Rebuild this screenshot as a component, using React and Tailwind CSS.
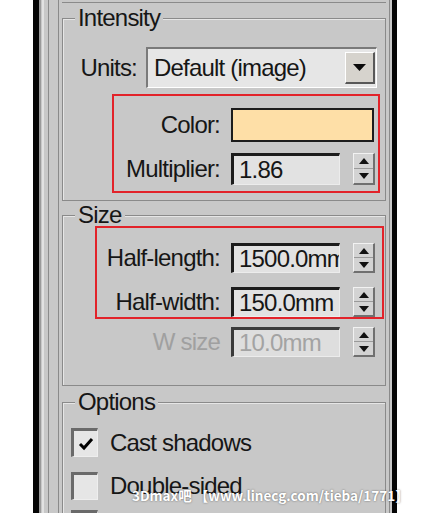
import React from "react";

const LBL = "text-right text-[24px] leading-none tracking-[-0.8px] text-[#161616] whitespace-nowrap";

function UpTri() {
  return (
    <svg width="10" height="6" viewBox="0 0 10 6"><polygon points="5,0 10,6 0,6" fill="#111" /></svg>
  );
}
function DownTri() {
  return (
    <svg width="10" height="6" viewBox="0 0 10 6"><polygon points="0,0 10,0 5,6" fill="#111" /></svg>
  );
}

function Spinner() {
  return (
    <div className="ml-[13px] flex h-full w-[22px] flex-col border-t border-l border-t-[#f2f2f2] border-l-[#f2f2f2] border-r-2 border-b-2 border-r-[#707070] border-b-[#707070] bg-[#d3d3d3]">
      <div className="flex flex-1 items-center justify-center border-b border-[#9a9a9a]">
        <UpTri />
      </div>
      <div className="flex flex-1 items-center justify-center">
        <DownTri />
      </div>
    </div>
  );
}

function NumInput({ value, disabled }) {
  return (
    <div
      className={
        disabled
          ? "flex h-full w-[109px] items-center overflow-hidden whitespace-nowrap border-t-[3px] border-l-[3px] border-t-[#3a3a3a] border-l-[#3a3a3a] border-r border-b border-r-[#ececec] border-b-[#ececec] bg-[#dedede] pl-[5px] text-[24px] leading-none tracking-[-0.8px] text-[#a3a3a3]"
          : "flex h-full w-[109px] items-center overflow-hidden whitespace-nowrap border-t-[3px] border-l-[3px] border-t-[#1c1c1c] border-l-[#1c1c1c] border-r border-b border-r-[#ececec] border-b-[#ececec] bg-[#e2e2e2] pl-[5px] text-[24px] leading-none tracking-[-0.8px] text-[#161616]"
      }
    >
      {value}
    </div>
  );
}

function Checkbox({ checked }) {
  return (
    <div className="flex h-full w-[27px] items-center justify-center border-t-[3px] border-l-[3px] border-t-[#6a6a6a] border-l-[#6a6a6a] border-r border-b border-r-[#eeeeee] border-b-[#eeeeee] bg-[#e6e6e6]">
      {checked && (
        <svg width="16" height="14" viewBox="0 0 16 14">
          <polyline points="2,7 6,11 14,2" fill="none" stroke="#000" strokeWidth="3" />
        </svg>
      )}
    </div>
  );
}

export default function App() {
  return (
    <div className="relative flex h-[513px] w-[443px] overflow-hidden bg-white font-['Liberation_Sans',Arial,sans-serif]">
      <div className="w-[33px] shrink-0" />
      <div className="w-[6px] shrink-0 bg-[#050505]" />
      <div className="flex w-[353px] shrink-0 bg-[#c8c8c8]">
        <div className="w-[9px] shrink-0 border-l-2 border-[#9a9a9a]">
          <div className="ml-[1px] h-full w-[2px] bg-[#e2e2e2]" />
        </div>
        <div className="w-[1px] shrink-0 bg-[#8c8c8c]" />
        <div className="w-[9px] shrink-0" />
        <div className="flex w-[332px] shrink-0 flex-col border-x border-[#8a8a8a] px-[3px]">
          <div className="h-[3px] shrink-0 border-b border-[#8a8a8a]" />

          {/* Intensity */}
          <fieldset className="mt-[5px] shrink-0 border border-[#8a8a8a] pb-[7px] shadow-[inset_1px_1px_0_#e6e6e6]">
            <legend className="ml-[12px] bg-[#c8c8c8] px-[3px] text-[24px] leading-[20px] tracking-[-0.8px] text-[#161616]">
              Intensity
            </legend>
            <div className="mt-[19px] flex h-[41px] items-center">
              <div className={LBL + " w-[74px]"}>Units:</div>
              <div className="ml-[9px] flex h-full w-[231px] items-center border-t-2 border-l-2 border-t-[#7a7a7a] border-l-[#7a7a7a] border-r border-b border-r-white border-b-white bg-[#e6e6e6] pl-[6px]">
                <span className="text-[24px] leading-none tracking-[-0.8px] text-[#161616] whitespace-nowrap">Default (image)</span>
                <div className="mr-[1px] ml-auto flex h-[32px] w-[30px] items-center justify-center border-t border-l border-t-white border-l-white border-r-2 border-b-2 border-r-[#585858] border-b-[#585858] bg-[#d6d3cd]">
                  <svg width="13" height="7" viewBox="0 0 13 7"><polygon points="0,0 13,0 6.5,7" fill="#0a0a0a" /></svg>
                </div>
              </div>
            </div>
            <div className="mt-[6px] ml-[49px] w-[268px] border-2 border-[#e2232a] pt-[12px] pb-[6px]">
              <div className="flex h-[34px] items-center">
                <div className={LBL + " w-[106px]"}>Color:</div>
                <div className="ml-[11px] h-full w-[143px] border-2 border-[#1c1c1c] bg-[#fedfa7]" />
              </div>
              <div className="mt-[11px] flex h-[32px] items-center">
                <div className={LBL + " w-[106px]"}>Multiplier:</div>
                <div className="ml-[11px] flex h-full items-center">
                  <NumInput value="1.86" />
                  <Spinner />
                </div>
              </div>
            </div>
          </fieldset>

          {/* Size */}
          <fieldset className="mt-[4px] shrink-0 border border-[#8a8a8a] pb-[28px] shadow-[inset_1px_1px_0_#e6e6e6]">
            <legend className="ml-[12px] bg-[#c8c8c8] px-[3px] text-[24px] leading-[20px] tracking-[-0.8px] text-[#161616]">
              Size
            </legend>
            <div className="mt-[1px] ml-[32px] w-[289px] border-2 border-[#e2232a] pt-[15px] pb-0">
              <div className="flex h-[30px] items-center">
                <div className={LBL + " w-[123px]"}>Half-length:</div>
                <div className="ml-[11px] flex h-full items-center">
                  <NumInput value="1500.0mm" />
                  <Spinner />
                </div>
              </div>
              <div className="mt-[14px] flex h-[30px] items-center">
                <div className={LBL + " w-[123px]"}>Half-width:</div>
                <div className="ml-[11px] flex h-full items-center">
                  <NumInput value="150.0mm" />
                  <Spinner />
                </div>
              </div>
            </div>
            <div className="mt-[8px] ml-[34px] flex h-[30px] items-center">
              <div className="w-[123px] text-right text-[24px] leading-none tracking-[-0.8px] text-[#a0a0a0] whitespace-nowrap">W size</div>
              <div className="ml-[11px] flex h-full items-center">
                <NumInput value="10.0mm" disabled />
                <Spinner />
              </div>
            </div>
          </fieldset>

          {/* Options */}
          <fieldset className="mt-[6px] shrink-0 border border-[#8a8a8a] pb-[20px] shadow-[inset_1px_1px_0_#e6e6e6]">
            <legend className="ml-[12px] bg-[#c8c8c8] px-[3px] text-[24px] leading-[20px] tracking-[-0.8px] text-[#161616]">
              Options
            </legend>
            <div className="mt-[16px] ml-[8px] flex h-[29px] items-center">
              <Checkbox checked />
              <span className="ml-[12px] text-[24px] leading-none tracking-[-0.8px] text-[#161616] whitespace-nowrap">Cast shadows</span>
            </div>
            <div className="mt-[15px] ml-[8px] flex h-[28px] items-center">
              <Checkbox />
              <span className="ml-[12px] text-[24px] leading-none tracking-[-0.8px] text-[#161616] whitespace-nowrap">Double-sided</span>
            </div>
            <div className="mt-[10px] ml-[8px] flex h-[28px] items-center">
              <Checkbox />
            </div>
          </fieldset>
        </div>
        <div className="w-[2px] shrink-0" />
      </div>
      <div className="w-[5px] shrink-0 bg-[#050505]" />

      <div className="absolute top-[485px] left-[132px] whitespace-nowrap font-['Noto_Sans_CJK_SC',sans-serif] text-[13.5px] leading-[20px] font-bold text-white [text-shadow:0_0_2px_rgba(0,0,0,0.55)]">
        3Dmax吧 【www.linecg.com/tieba/1771】
      </div>
    </div>
  );
}
